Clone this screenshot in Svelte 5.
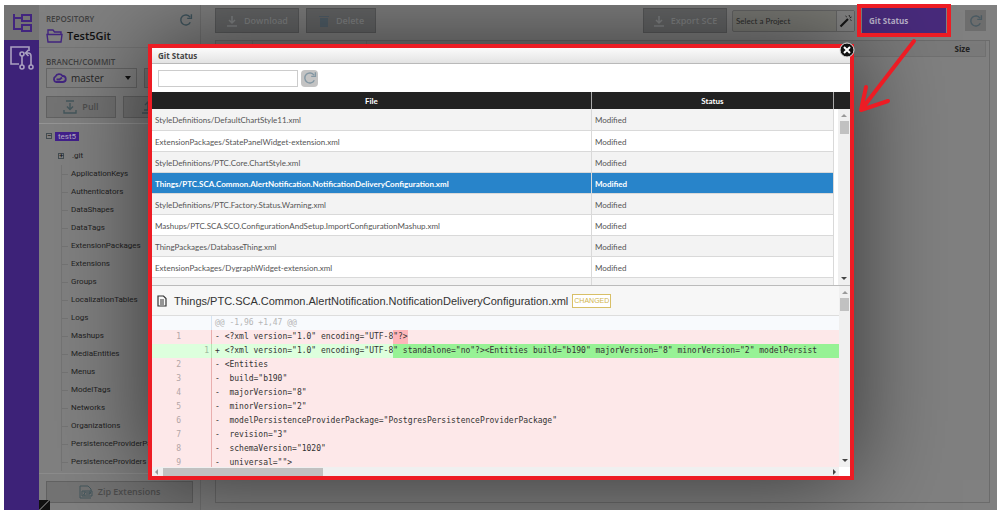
<script lang="ts">
  type DiffLine = {
    kind: "del" | "add";
    oldNo?: number;
    newNo?: number;
    text: string;
    mark?: string;
  };

  const folders = [
    "ApplicationKeys",
    "Authenticators",
    "DataShapes",
    "DataTags",
    "ExtensionPackages",
    "Extensions",
    "Groups",
    "LocalizationTables",
    "Logs",
    "Mashups",
    "MediaEntities",
    "Menus",
    "ModelTags",
    "Networks",
    "Organizations",
    "PersistenceProviderPackages",
    "PersistenceProviders",
  ];

  const files = [
    "StyleDefinitions/DefaultChartStyle11.xml",
    "ExtensionPackages/StatePanelWidget-extension.xml",
    "StyleDefinitions/PTC.Core.ChartStyle.xml",
    "Things/PTC.SCA.Common.AlertNotification.NotificationDeliveryConfiguration.xml",
    "StyleDefinitions/PTC.Factory.Status.Warning.xml",
    "Mashups/PTC.SCA.SCO.ConfigurationAndSetup.ImportConfigurationMashup.xml",
    "ThingPackages/DatabaseThing.xml",
    "ExtensionPackages/DygraphWidget-extension.xml",
  ];

  const diff: DiffLine[] = [
    { kind: "del", oldNo: 1, text: '- <?xml version="1.0" encoding="UTF-8', mark: '"?>' },
    {
      kind: "add",
      newNo: 1,
      text: '+ <?xml version="1.0" encoding="UTF-8',
      mark: '" standalone="no"?><Entities build="b190" majorVersion="8" minorVersion="2" modelPersist',
    },
    { kind: "del", oldNo: 2, text: "- <Entities" },
    { kind: "del", oldNo: 3, text: '-  build="b190"' },
    { kind: "del", oldNo: 4, text: '-  majorVersion="8"' },
    { kind: "del", oldNo: 5, text: '-  minorVersion="2"' },
    { kind: "del", oldNo: 6, text: '-  modelPersistenceProviderPackage="PostgresPersistenceProviderPackage"' },
    { kind: "del", oldNo: 7, text: '-  revision="3"' },
    { kind: "del", oldNo: 8, text: '-  schemaVersion="1020"' },
    { kind: "del", oldNo: 9, text: '-  universal="">' },
  ];

  let selected = $state(3);
</script>

{#snippet refresh()}
  <svg class="refresh" viewBox="0 0 14 14" aria-hidden="true">
    <path d="M11.3 9.2A5 5 0 1 1 11 4.2M12.4 1.2v4.2H8.2" fill="none" stroke="currentColor" stroke-width="1.4" />
  </svg>
{/snippet}

{#snippet vbar()}
  <div class="vbar" aria-hidden="true">
    <i class="up"></i>
    <i class="thumb"></i>
    <i class="down"></i>
  </div>
{/snippet}

<div class="page">
  <div class="app">
    <nav class="rail">
      <button class="tab active" aria-label="Repository tree">
        <svg viewBox="0 0 22 22" fill="none" stroke="currentColor" stroke-width="2">
          <path d="M3 2v15h8M3 6h8" />
          <rect x="11" y="3" width="9" height="6" />
          <rect x="11" y="13" width="9" height="6" />
        </svg>
      </button>
      <button class="tab" aria-label="Pull requests">
        <svg class="pr" viewBox="0 0 24 26" fill="none" stroke="currentColor" stroke-width="1.6">
          <path d="M9 19H1V2h18v4" />
          <circle cx="12" cy="9" r="2" />
          <circle cx="12" cy="22" r="2" />
          <circle cx="21" cy="22" r="2" />
          <path d="M12 11v9M21 20v-9q0-3-3-3h-2M18.5 5l-3 3 3 3" />
        </svg>
      </button>
    </nav>

    <aside class="side">
      <section class="repo">
        <div>
          <h2>REPOSITORY</h2>
          <div class="repo-name">
            <svg viewBox="0 0 17 14" fill="none" stroke="currentColor" stroke-width="1.4">
              <path d="M2 5.5V1h5l1.500 2H15v2.500M1 5.500h15l-1 7.500H2z" />
            </svg>
            <strong>Test5Git</strong>
          </div>
        </div>
        <button class="plain" aria-label="Refresh repository">{@render refresh()}</button>
      </section>
      <section class="branch">
        <h2>BRANCH/COMMIT</h2>
        <div class="branch-row">
          <button class="branch-select">
            <svg class="cloud" viewBox="0 0 15 10" fill="none" stroke="currentColor" stroke-width="1.800">
              <path d="M4 9a3 3 0 0 1-.5-5.500A4 4 0 0 1 10.500 3 3 3 0 0 1 11 9zM4.500 6.500h3l2.500-2" />
            </svg>
            <span>master</span>
            <i class="caret"></i>
          </button>
          <button class="gray grow" aria-label="Commit"></button>
        </div>
        <div class="branch-row pulls">
          <button class="gray pull">
            <svg viewBox="0 0 14 14" fill="none" stroke="currentColor" stroke-width="1.4">
              <path d="M3 1h8M7 3v6M4 6.500 7 9.500l3-3M1 10v3h12v-3" />
            </svg>
            Pull
          </button>
          <button class="gray pull" aria-label="Push">
            <svg viewBox="0 0 14 14" fill="none" stroke="currentColor" stroke-width="1.4">
              <path d="M7 10V2M4 5l3-3 3 3M3 10h8M1 13h12" />
            </svg>
          </button>
        </div>
      </section>
      <ul class="tree">
        <li class="root"><i class="box">−</i><span>test5</span></li>
        <li class="git"><i class="box">+</i><span>.git</span></li>
        {#each folders as name}
          <li class="leaf"><span>{name}</span></li>
        {/each}
      </ul>
      <div class="zip">
        <button class="gray">
          <svg viewBox="0 0 14 14" fill="none" stroke="currentColor">
            <path d="M1 13V1h8l3 3v2M1 13h11M3 6h10v5H3zM4.500 7h2l-2 3h2M8 7v3M10 10V7h1.500v1.500H10" />
          </svg>
          Zip Extensions
        </button>
      </div>
    </aside>

    <main>
      <header class="toolbar">
        <button class="dark">
          <svg viewBox="0 0 12 12" fill="none" stroke="currentColor" stroke-width="1.5"><path d="M6 1v6M3 5l3 3 3-3M1 11h10" /></svg>
          Download
        </button>
        <button class="dark delete">
          <svg viewBox="0 0 12 12" fill="#52606a"><path d="M2 3h8v9H2zM1 1h10v1H1z" /></svg>
          Delete
        </button>
        <span class="spacer"></span>
        <button class="dark">
          <svg viewBox="0 0 12 12" fill="none" stroke="currentColor" stroke-width="1.5"><path d="M6 1v6M3 5l3 3 3-3M1 11h10" /></svg>
          Export SCE
        </button>
        <div class="picker">
          <input aria-label="Project" placeholder="Select a Project" />
          <button aria-label="Pick project">
            <svg viewBox="0 0 14 14"><path d="M1.500 12.500 9 5" stroke="#151515" stroke-width="2.2" /><path d="m10 1 .8 1.800M12.500 3l-1.800 1M12.500 6.500l-1.300-.8M6.500 2l1.300 1" stroke="#222" /></svg>
          </button>
        </div>
        <button class="git-status">Git Status</button>
        <button class="reload" aria-label="Refresh">{@render refresh()}</button>
      </header>
      <div class="list">
        <div class="list-head"><span></span><span></span><b>Size</b></div>
      </div>
    </main>
    <i class="corner"></i>

    <div class="overlay">
      <div class="dialog" role="dialog" aria-labelledby="dialog-title">
        <h1 id="dialog-title">Git Status</h1>
        <div class="filter">
          <input type="text" aria-label="Filter files" />
          <button aria-label="Refresh status">{@render refresh()}</button>
        </div>
        <div class="files">
          <table>
            <thead>
              <tr><th class="file">File</th><th>Status</th></tr>
            </thead>
            <tbody>
              {#each files as file, i}
                <tr class:selected={selected === i} onclick={() => (selected = i)}>
                  <td>{file}</td>
                  <td>Modified</td>
                </tr>
              {/each}
              <tr><td></td><td></td></tr>
            </tbody>
          </table>
          <div class="files-side">{@render vbar()}</div>
        </div>
        <div class="diff">
          <div class="diff-main">
            <div class="diff-head">
              <svg viewBox="0 0 10 12" fill="none" stroke="#333" stroke-width="1.2">
                <path d="M1 1h5.500L9 3.500V11H1zM3 5h4M3 7h4M3 9h4" />
              </svg>
              <span>Things/PTC.SCA.Common.AlertNotification.NotificationDeliveryConfiguration.xml</span>
              <em>CHANGED</em>
            </div>
            <div class="code">
              <div class="line hunk"><span class="nums"></span><pre>@@ -1,96 +1,47 @@</pre></div>
              {#each diff as line}
                <div class="line {line.kind}">
                  <span class="nums"><i>{line.oldNo ?? ""}</i><i>{line.newNo ?? ""}</i></span>
                  <pre>{line.text}{#if line.mark}<mark>{line.mark}</mark>{/if}</pre>
                </div>
              {/each}
            </div>
            <div class="hbar" aria-hidden="true"><i class="left"></i><i class="thumb"></i><i class="right"></i></div>
          </div>
          <div class="diff-side">{@render vbar()}</div>
        </div>
        <i class="frame"></i>
        <button class="close" aria-label="Close">
          <svg viewBox="0 0 16 16"><circle cx="8" cy="8" r="7" fill="#111" stroke="#ddd" /><path d="m5 5 6 6M11 5l-6 6" stroke="#fff" stroke-width="2" /></svg>
        </button>
      </div>
    </div>
  </div>

  <i class="callout"></i>
  <svg class="arrow" viewBox="0 0 60 76" fill="none" stroke="#ed1c24" stroke-width="4" stroke-linecap="round" stroke-linejoin="round">
    <path d="M56 3 3 72M8 49 3 72l27-9" />
  </svg>
</div>

<style>
  :global(body) {
    margin: 0;
    background: #fff;
  }

  .page {
    position: relative;
    box-sizing: border-box;
    min-height: 100vh;
    padding: 5px 2px 3px 4px;
    display: flex;
    overflow: hidden;
    font: 8px/12px "Open Sans", sans-serif;
    color: #222;
  }

  .page * {
    box-sizing: border-box;
  }

  button,
  input {
    font: inherit;
    color: inherit;
    margin: 0;
    padding: 0;
    border: 0;
    border-radius: 0;
    background: none;
  }

  svg {
    display: block;
    flex: none;
  }

  i {
    font-style: normal;
  }

  h1,
  h2,
  ul,
  pre {
    margin: 0;
    padding: 0;
  }

  .app {
    position: relative;
    flex: 1;
    display: flex;
    overflow: hidden;
    background: #808080;
  }

  .rail {
    position: relative;
    z-index: 1;
    width: 35px;
    background: #3d2278;
  }

  .tab {
    display: grid;
    place-items: center;
    width: 35px;
    height: 35px;
    color: #aaa1c0;
  }

  .tab.active {
    background: #747474;
    color: #42257f;
  }

  .tab svg {
    width: 22px;
    height: 22px;
  }

  .tab .pr {
    width: 24px;
    height: 26px;
  }

  .side {
    width: 162px;
    display: flex;
    flex-direction: column;
    border-right: 1px solid #727272;
  }

  .repo {
    display: flex;
    justify-content: space-between;
    height: 43px;
    padding: 8px 7px 0;
    border-bottom: 1px solid #757575;
  }

  h2 {
    font-size: 8px;
    line-height: 12px;
    font-weight: 600;
    color: #414141;
  }

  .repo-name {
    display: flex;
    align-items: center;
    gap: 4px;
    height: 22px;
    font-size: 11px;
    color: #42257f;
  }

  .repo-name strong {
    color: #111;
    font-weight: 600;
  }

  .repo-name svg {
    width: 17px;
    height: 14px;
  }

  .plain {
    height: 14px;
    color: #40555e;
  }

  .refresh {
    width: 14px;
    height: 14px;
  }

  .branch {
    padding: 8px 0 5px 7px;
    border-bottom: 1px solid #959595;
    overflow: hidden;
  }

  .branch-row {
    display: flex;
    gap: 7px;
  }

  .branch-select {
    flex: none;
    display: flex;
    align-items: center;
    gap: 4px;
    width: 91px;
    height: 20px;
    padding: 0 5px;
    border: 1px solid #666;
    font-size: 10px;
    color: #242424;
  }

  .cloud {
    width: 15px;
    height: 10px;
    color: #42257f;
  }

  .caret {
    margin-left: auto;
    border: 3px solid transparent;
    border-top: 4px solid #111;
    border-bottom: 0;
  }

  .gray {
    display: flex;
    align-items: center;
    justify-content: center;
    gap: 5px;
    height: 22px;
    border: 1px solid #626262;
    background: #737373;
    color: #4e4e4e;
    font-size: 9px;
    font-weight: 600;
  }

  .gray svg {
    width: 14px;
    height: 14px;
    color: #45575c;
  }

  .grow {
    flex: 1;
    height: 20px;
  }

  .pulls {
    margin-top: 8px;
  }

  .pull {
    flex: none;
    width: 70px;
  }

  .pull + .pull {
    padding-right: 20px;
  }

  .tree {
    flex: 1;
    list-style: none;
    padding: 3px 0 0 7px;
    border-bottom: 1px solid #8c8c8c;
    font-family: Roboto, sans-serif;
    overflow: hidden;
    color: #222;
  }

  .tree li {
    display: flex;
    align-items: center;
    height: 18px;
    white-space: nowrap;
  }

  .tree .root {
    height: 20px;
    padding-bottom: 2px;
  }

  .root span {
    margin-left: 3px;
    padding: 0 3px;
    line-height: 9px;
    background: #42208c;
    color: #b5aec4;
  }

  .box {
    width: 6px;
    height: 6px;
    border: 1px solid #444d52;
    line-height: 4px;
    text-align: center;
    color: #111;
  }

  .git {
    padding-left: 12px;
  }

  .git span {
    margin-left: 8px;
  }

  .leaf {
    margin-left: 15px;
    border-left: 1px solid #747474;
  }

  .leaf::before {
    content: "";
    width: 6px;
    margin-right: 3px;
    border-top: 1px solid #747474;
  }

  .zip {
    padding: 7px 7px 7px;
  }

  .zip .gray {
    width: 100%;
  }

  main {
    flex: 1;
    display: flex;
    flex-direction: column;
    padding: 3px 7px 7px 14px;
  }

  .toolbar {
    display: flex;
    align-items: center;
    gap: 5px;
    height: 25px;
  }

  .dark {
    display: flex;
    align-items: center;
    justify-content: center;
    gap: 6px;
    width: 84px;
    height: 25px;
    border: 1px solid #5a5b5c;
    background: #666768;
    color: #838586;
    font-size: 9px;
    font-weight: 600;
  }

  .dark svg {
    width: 12px;
    height: 12px;
  }

  .delete {
    width: 70px;
    margin-left: 2px;
  }

  .spacer {
    flex: 1;
  }

  .picker {
    display: flex;
    width: 123px;
    height: 22px;
    border: 1px solid #666;
    border-radius: 2px;
    background: #7b7b76;
  }

  .picker input {
    flex: 1;
    min-width: 0;
    padding-left: 3px;
    font-family: Lato, sans-serif;
  }

  .picker input::placeholder {
    color: #2b2b2b;
    opacity: 1;
  }

  .picker button {
    display: grid;
    place-items: center;
    width: 18px;
    border-left: 1px solid #666;
    background: #858585;
  }

  .picker svg {
    width: 14px;
    height: 14px;
  }

  .git-status {
    width: 84px;
    height: 25px;
    margin-left: 2px;
    padding-left: 7px;
    background: #482a7b;
    color: #b8b0c9;
    font-weight: 700;
    text-align: left;
  }

  .reload {
    display: grid;
    place-items: center;
    width: 21px;
    height: 21px;
    margin: 0 4px 0 14px;
    background: #6d6d6d;
    color: #4a5a62;
  }

  .list {
    flex: 1;
    margin-top: 7px;
    border: 1px solid #6b6b6b;
  }

  .list-head {
    display: grid;
    grid-template-columns: 37px 114px 1fr;
    height: 16px;
    margin-right: 3px;
    border: solid #717171;
    border-width: 0 1px 1px 0;
    background: #7a7a7a;
  }

  .list-head span {
    border-right: 1px solid #707070;
  }

  .list-head b {
    padding-right: 15px;
    line-height: 16px;
    font-weight: 700;
    text-align: right;
  }

  .corner {
    position: absolute;
    left: 35px;
    bottom: 0;
    width: 11px;
    height: 10px;
    background: linear-gradient(135deg, #111 45%, #999 50%, #111 55%);
  }

  /* dialog */
  .overlay {
    position: absolute;
    inset: 0;
    display: flex;
    padding: 39px 143px 30px 144px;
  }

  .dialog {
    position: relative;
    flex: 1;
    min-width: 0;
    display: flex;
    flex-direction: column;
    padding: 4px;
    background: #fff;
    box-shadow: 0 0 90px rgba(0, 0, 0, 0.6);
  }

  .frame {
    position: absolute;
    inset: 0;
    border: 4px solid #ed1c24;
    pointer-events: none;
  }

  h1 {
    height: 16px;
    padding-left: 6px;
    border-bottom: 1px solid #b9b9b9;
    background: linear-gradient(#fbfbfb, #e3e3e3);
    font-size: 8px;
    line-height: 15px;
    font-weight: 700;
    color: #444;
  }

  .filter {
    display: flex;
    align-items: center;
    gap: 3px;
    height: 28px;
    padding-left: 6px;
  }

  .filter input {
    width: 140px;
    height: 17px;
    border: 1px solid #ccc;
  }

  .filter button {
    display: grid;
    place-items: center;
    width: 17px;
    height: 17px;
    border-radius: 4px;
    background: #c3c3c3;
    color: #8397a3;
  }

  .files {
    display: flex;
    height: 194px;
    overflow: hidden;
    border-bottom: 1px solid #bbb;
  }

  table {
    flex: 1;
    width: 100%;
    border-collapse: separate;
    border-spacing: 0;
    table-layout: fixed;
    align-self: flex-start;
    font-family: Lato, sans-serif;
  }

  th {
    height: 17px;
    padding: 0;
    background: #222;
    color: #fff;
    font-weight: 700;
    line-height: 16px;
    border-right: 1px solid #aaa;
  }

  .file {
    width: 64.5%;
  }

  td {
    height: 21px;
    padding: 1px 3px 0;
    border-right: 1px solid #d9d9d9;
    border-bottom: 1px solid #d9d9d9;
    white-space: nowrap;
    color: #555;
  }

  tbody tr:nth-child(odd) td {
    background: #f3f3f3;
  }

  tbody tr:first-child td {
    height: 22px;
  }

  tbody tr.selected td {
    background: #2884ca;
    color: #fff;
    font-weight: 700;
  }

  .files-side {
    flex: none;
    display: flex;
    width: 16px;
    padding-left: 4px;
    border-top: 17px solid #222;
  }

  .vbar {
    flex: 1;
    display: flex;
    flex-direction: column;
    align-items: center;
    padding: 5px 1px;
    background: #f0f0f0;
  }

  .up {
    border: 3px solid transparent;
    border-top: 0;
    border-bottom: 3px solid #999;
  }

  .vbar .thumb {
    width: 9px;
    height: 13px;
    margin-top: 4px;
    background: #c1c1c1;
  }

  .down {
    margin-top: auto;
    border: 3px solid transparent;
    border-bottom: 0;
    border-top: 3px solid #444;
  }

  .diff {
    flex: 1;
    display: flex;
    min-height: 0;
  }

  .diff-main {
    flex: 1;
    min-width: 0;
    display: flex;
    flex-direction: column;
  }

  .diff-head {
    display: flex;
    align-items: center;
    flex: none;
    height: 30px;
    padding-left: 5px;
    border-bottom: 1px solid #ddd;
    background: #f7f7f7;
    font: 11px/16px "Liberation Sans", sans-serif;
    color: #333;
  }

  .diff-head svg {
    width: 10px;
    height: 12px;
    margin-right: 7px;
  }

  .diff-head em {
    margin-left: 4px;
    padding: 0 1px;
    border: 1px solid #d8bf67;
    background: #fff;
    color: #d0b44c;
    font-size: 7px;
    line-height: 12px;
    font-style: normal;
  }

  .code {
    flex: 1;
    min-height: 0;
    overflow: hidden;
    background: #fde8e9;
  }

  .line {
    display: flex;
    height: 14px;
    font: 8px/14px "DejaVu Sans Mono", monospace;
    color: #333;
  }

  .line pre {
    font: inherit;
    padding-left: 3px;
    flex: 1;
    min-width: 0;
    overflow: hidden;
  }

  .nums {
    flex: none;
    display: grid;
    grid-template-columns: 29px 28px;
    width: 60px;
    border-right: 1px solid #e9aeae;
    color: #b3a5a6;
    text-align: right;
  }

  .hunk {
    background: #f8fafd;
    color: #b5b5b5;
  }

  .hunk .nums {
    border-color: #d5e4f2;
  }

  .add {
    background: #ddffdd;
  }

  .add .nums {
    border-color: #b4e2b4;
    color: #9dbb9d;
  }

  .add pre {
    background: linear-gradient(90deg, #ddffdd 50%, #97f295 50%);
  }

  mark {
    display: inline-block;
    height: 14px;
    background: #ffb6ba;
    color: inherit;
  }

  .add mark {
    background: #97f295;
  }

  .hbar {
    display: flex;
    align-items: center;
    flex: none;
    height: 9px;
    padding: 0 3px;
    background: #f0f0f0;
  }

  .hbar .thumb {
    width: 160px;
    height: 8px;
    margin-left: 5px;
    background: #c1c1c1;
  }

  .left {
    border: 3px solid transparent;
    border-left: 0;
    border-right: 3px solid #999;
  }

  .right {
    margin-left: auto;
    border: 3px solid transparent;
    border-right: 0;
    border-left: 3px solid #444;
  }

  .diff-side {
    flex: none;
    display: flex;
    width: 11px;
    padding-bottom: 9px;
  }

  .close {
    position: absolute;
    top: -2px;
    right: -1px;
    width: 16px;
    height: 16px;
  }

  .close svg {
    width: 16px;
    height: 16px;
  }

  /* red markup drawn over the page */
  .callout {
    position: absolute;
    top: 4px;
    right: 48px;
    width: 94px;
    height: 33px;
    border: 4px solid #ed1c24;
    pointer-events: none;
  }

  .arrow {
    position: absolute;
    top: 38px;
    right: 81px;
    width: 60px;
    height: 76px;
    pointer-events: none;
  }
</style>
